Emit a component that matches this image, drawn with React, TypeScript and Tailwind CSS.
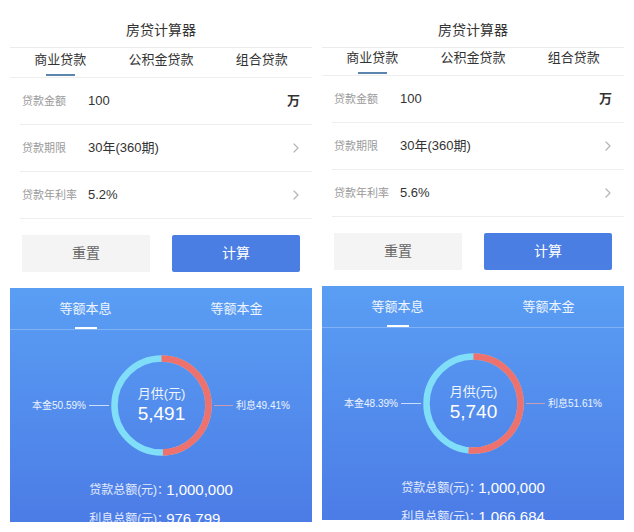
import React from "react";

type PanelData = {
  rate: string;
  principal: string;
  interest: number;
  monthly: string;
  total: string;
  interestTotal: string;
  tabRow: string;
};

const PANELS: PanelData[] = [
  {
    rate: "5.2%",
    principal: "50.59%",
    interest: 49.41,
    monthly: "5,491",
    total: "1,000,000",
    interestTotal: "976,799",
    tabRow: "h-[30px] pt-[3px]",
  },
  {
    rate: "5.6%",
    principal: "48.39%",
    interest: 51.61,
    monthly: "5,740",
    total: "1,000,000",
    interestTotal: "1,066,684",
    tabRow: "h-[28px] pt-[1px]",
  },
];

const Chevron = () => (
  <svg width="8" height="12" viewBox="0 0 8 12" fill="none">
    <path d="M2 2l4 4-4 4" stroke="#b5b5b5" strokeWidth="1.2" strokeLinecap="round" strokeLinejoin="round" />
  </svg>
);

const Donut: React.FC<{ interest: number; monthly: string }> = ({ interest, monthly }) => {
  const r = 47;
  const c = 2 * Math.PI * r;
  const red = (interest / 100) * c;
  return (
    <div className="relative w-[101px] h-[101px]">
      <svg width="101" height="101" viewBox="0 0 101 101">
        <circle cx="50.5" cy="50.5" r={r} fill="none" stroke="#80def8" strokeWidth="6.5" />
        <circle
          cx="50.5"
          cy="50.5"
          r={r}
          fill="none"
          stroke="#ef716d"
          strokeWidth="6.5"
          strokeDasharray={`${red} ${c}`}
          transform="rotate(-90 50.5 50.5)"
        />
      </svg>
      <div className="absolute inset-0 flex flex-col items-center justify-center pb-[2px]">
        <div className="text-[13px] leading-[18px] text-white/90">月供(元)</div>
        <div className="text-[19px] leading-[22px] text-white">{monthly}</div>
      </div>
    </div>
  );
};

const Row: React.FC<{ label: string; value: string; right: React.ReactNode }> = ({ label, value, right }) => (
  <div className="ml-[10px] h-[47px] flex items-center border-b border-[#eeeeee] pl-[2px] pr-[12px]">
    <div className="w-[66px] text-[11px] text-[#9a9a9a]">{label}</div>
    <div className="flex-1 text-[13px] text-[#333333]">{value}</div>
    {right}
  </div>
);

const Tab: React.FC<{ label: string; active?: boolean; bar: string; gap: string }> = ({ label, active, bar, gap }) => (
  <div className="flex flex-col items-center">
    <span className="leading-[18px] whitespace-nowrap">{label}</span>
    <span className={`${gap} h-[2px] ${active ? bar : "bg-transparent"}`} />
  </div>
);

const Panel: React.FC<{ d: PanelData }> = ({ d }) => (
  <div className="w-[302px] flex flex-col">
    <div className="mt-[14px] h-[34px] flex items-center justify-center border-b border-[#ebebeb] text-[14px] text-[#333333]">
      房贷计算器
    </div>
    <div className={`${d.tabRow} grid grid-cols-3 border-b border-[#eeeeee] text-[13px] text-[#333333]`}>
      <Tab label="商业贷款" active bar="w-[29px] bg-[#5d86ae]" gap="mt-[5px]" />
      <Tab label="公积金贷款" bar="w-[29px]" gap="mt-[5px]" />
      <Tab label="组合贷款" bar="w-[29px]" gap="mt-[5px]" />
    </div>
    <Row label="贷款金额" value="100" right={<span className="text-[13px] font-bold text-[#333333]">万</span>} />
    <Row label="贷款期限" value="30年(360期)" right={<Chevron />} />
    <Row label="贷款年利率" value={d.rate} right={<Chevron />} />
    <div className="mt-[16px] px-[12px] flex gap-[22px]">
      <button className="w-[128px] h-[37px] bg-[#f4f4f4] text-[14px] text-[#666666]">重置</button>
      <button className="w-[128px] h-[37px] bg-[#4a7ee3] rounded-[2px] text-[14px] text-white">计算</button>
    </div>
    <div className="mt-[16px] h-[234px] overflow-hidden bg-gradient-to-b from-[#5a9ef4] to-[#4c7ce6] flex flex-col">
      <div className="h-[42px] pt-[12px] grid grid-cols-2 border-b border-white/25 text-[13px] text-white/90">
        <Tab label="等额本息" active bar="w-[22px] bg-white" gap="mt-[9px]" />
        <Tab label="等额本金" bar="w-[22px]" gap="mt-[9px]" />
      </div>
      <div className="mt-[25px] flex items-center justify-center">
        <span className="text-[10px] text-white/90 whitespace-nowrap">本金{d.principal}</span>
        <span className="ml-[3px] mr-[2px] w-[20px] h-px bg-white/70" />
        <Donut interest={d.interest} monthly={d.monthly} />
        <span className="ml-[2px] mr-[3px] w-[19px] h-px bg-[#e9a0a8]/80" />
        <span className="text-[10px] text-white/90 whitespace-nowrap">利息{d.interest}%</span>
      </div>
      <div className="mt-[24px] mx-auto w-fit flex flex-col gap-[9px]">
        <div className="flex items-center h-[20px] whitespace-nowrap">
          <span className="w-[77px] text-[12px] text-white/85">贷款总额(元)：</span>
          <span className="text-[15px] text-white">{d.total}</span>
        </div>
        <div className="flex items-center h-[20px] whitespace-nowrap">
          <span className="w-[77px] text-[12px] text-white/85">利息总额(元)：</span>
          <span className="text-[15px] text-white">{d.interestTotal}</span>
        </div>
      </div>
    </div>
  </div>
);

export default function App() {
  return (
    <div className="w-[634px] h-[532px] overflow-hidden bg-white flex gap-[10px] px-[10px] font-['Liberation_Sans','Noto_Sans_CJK_SC',sans-serif]">
      {PANELS.map((d, i) => (
        <Panel key={i} d={d} />
      ))}
    </div>
  );
}
